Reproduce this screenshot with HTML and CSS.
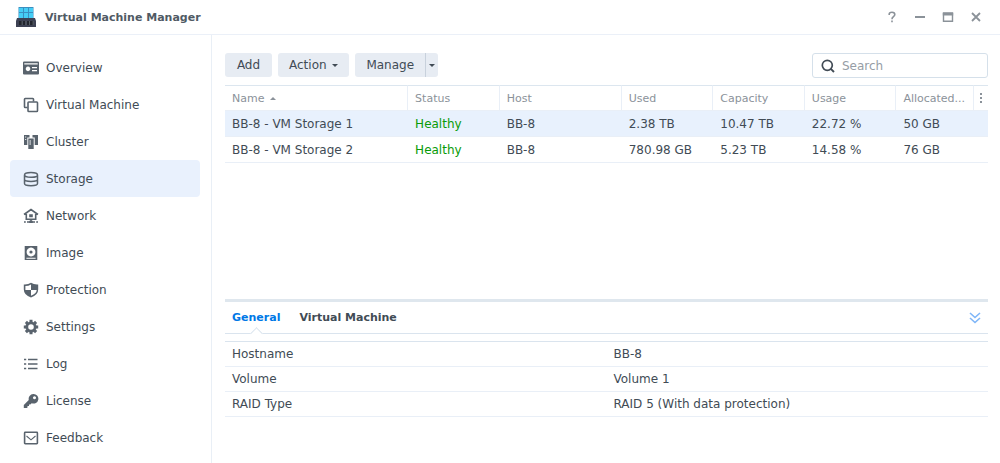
FILE: index.html
```html
<!DOCTYPE html>
<html lang="en">
<head>
  <meta charset="UTF-8">
  <meta name="viewport" content="width=device-width, initial-scale=1.0">
  <title>Virtual Machine Manager</title>
  <link rel="stylesheet" href="styles.css">
</head>
<body>
  <header class="titlebar">
    <svg class="app-icon" viewBox="0 0 20 20">
      <path d="M2.500 0h15v12h-15z" fill="#3a8fc0"/>
      <path d="M3 1h4v4h-4zM8 1h4v4h-4zM13 1h4v4h-4zM3 6h4v5h-4zM8 6h4v5h-4zM13 6h4v5h-4z" fill="#45cdf5"/>
      <path d="M1 11h18l1 3v6h-20v-6z" fill="#3d4153"/>
      <path d="M3 14h3v4h-3zM7 14h2v4h-2zM11 14h2v4h-2zM14 14h3v4h-3z" fill="#22252e"/>
      <path d="M6 14v4M10 14v4M13.500 14v4M17 14v4" stroke="#6b746f" stroke-width=".6"/>
    </svg>
    <h1>Virtual Machine Manager</h1>
    <div class="window-controls">
      <button type="button" aria-label="Help">
        <svg viewBox="0 0 12 12"><path d="M3.200 4V3.200Q3.200 1.300 6 1.300T8.800 3.600Q8.800 4.800 7.400 5.700Q6 6.500 6 8.200M6 9.500v1.800" fill="none" stroke="currentColor" stroke-width="1.600"/></svg>
      </button>
      <button type="button" aria-label="Minimize">
        <svg viewBox="0 0 12 12"><path d="M1 6h10" stroke="currentColor" stroke-width="2"/></svg>
      </button>
      <button type="button" aria-label="Maximize">
        <svg viewBox="0 0 12 12"><path d="M1.500 2v8.300h9V2M1 3h10" fill="none" stroke="currentColor" stroke-width="1.400"/><path d="M.8 1.200h10.400v3.300H.8z" fill="currentColor"/></svg>
      </button>
      <button type="button" aria-label="Close">
        <svg viewBox="0 0 12 12"><path d="M2 2l8 8M10 2l-8 8" stroke="currentColor" stroke-width="1.800"/></svg>
      </button>
    </div>
  </header>

  <div class="window-body">
    <nav class="sidebar">
      <a href="#overview">
        <svg viewBox="0 0 16 16"><path fill-rule="evenodd" d="M1 1.500h14q1 0 1 1v11q0 1-1 1H1q-1 0-1-1v-11q0-1 1-1zM1.300 3.200v1.300h13.400V3.200zM5 6.600a2.300 2.300 0 1 0 .01 0zM9 7v1.200h5V7zM9 10v1.200h5V10z" fill="currentColor"/></svg>
        Overview
      </a>
      <a href="#vm">
        <svg viewBox="0 0 16 16"><path d="M4.500 10.500H2.200q-.7 0-.7-.7V2.200q0-.7.700-.7h7.600q.7 0 .7.700v2.300" fill="none" stroke="currentColor" stroke-width="1.600"/><rect x="5" y="5" width="9.500" height="9.500" rx=".8" fill="none" stroke="currentColor" stroke-width="1.600"/></svg>
        Virtual Machine
      </a>
      <a href="#cluster">
        <svg viewBox="0 0 16 16"><path fill-rule="evenodd" d="M1 1h5.500v2.500H4.300V11H1zM2.200 2.500v1h1v-1zM2.200 5v1h1V5zM9.500 1H15v10h-3.300V3.500H9.500z" fill="currentColor"/><path fill-rule="evenodd" d="M5.300 4.500h5.400V15H5.300zM6.700 6v5h.8V6z" fill="currentColor"/></svg>
        Cluster
      </a>
      <a href="#storage" class="active">
        <svg viewBox="0 0 16 16"><path d="M1.500 4v8.500Q1.500 14.700 8 14.700t6.500-2.200V4M1.500 4Q1.500 1.500 8 1.500T14.500 4T8 6.300T1.500 4M1.500 8.200Q1.500 10.400 8 10.400t6.500-2.200" fill="none" stroke="currentColor" stroke-width="1.500"/></svg>
        Storage
      </a>
      <a href="#network">
        <svg viewBox="0 0 16 16"><path d="M1 6.500L8 1.500l7 5M3.300 6v5.200h9.400V6M8 11v2.500M4 14h8M1 14h1.800M13.200 14H15" fill="none" stroke="currentColor" stroke-width="1.600"/><path d="M6.200 6.300h3.600v3H6.200zM6.300 12.800h3.400V15H6.300z" fill="currentColor"/></svg>
        Network
      </a>
      <a href="#image">
        <svg viewBox="0 0 16 16"><path fill-rule="evenodd" d="M1.700 1h12.600v14H1.700zM8 2.600a4.400 4.400 0 1 0 .01 0zM3.400 12.800v1h9.200v-1z" fill="currentColor"/><circle cx="8" cy="7" r="1.600" fill="currentColor"/></svg>
        Image
      </a>
      <a href="#protection">
        <svg viewBox="0 0 16 16"><path fill-rule="evenodd" d="M8 .8q3 2 7.200 1.700v5q0 5.500-7.200 8Q.8 13 .8 7.500v-5Q5 2.800 8 .8zM8 2.500Q5.500 4 2.400 4v4H8zM8 8v5.700q5.500-2 5.700-5.700z" fill="currentColor"/></svg>
        Protection
      </a>
      <a href="#settings">
        <svg viewBox="0 0 16 16"><circle cx="8" cy="8" r="4.200" fill="none" stroke="currentColor" stroke-width="2.800"/><path d="M8 .8V3M8 13v2.200M.8 8H3M13 8h2.200M2.900 2.900l1.500 1.500M11.600 11.600l1.500 1.500M2.900 13.100l1.500-1.500M11.600 4.400l1.500-1.500" stroke="currentColor" stroke-width="3"/></svg>
        Settings
      </a>
      <a href="#log">
        <svg viewBox="0 0 16 16"><path d="M1 3.500h2.200M5 3.500h9.500M1 8h2.200M5 8h9.500M1 12.500h2.200M5 12.500h9.500" stroke="currentColor" stroke-width="1.700"/></svg>
        Log
      </a>
      <a href="#license">
        <svg viewBox="0 0 16 16"><path fill-rule="evenodd" d="M10.200 1a4.800 4.800 0 1 1-1.500 9.200L7.300 11.500H6v1.600H4.500v1.400L3.800 15H.8v-3L5.800 7A4.800 4.800 0 0 1 10.200 1zM11.500 3.200a1.500 1.500 0 1 0 .01 0z" fill="currentColor"/></svg>
        License
      </a>
      <a href="#feedback">
        <svg viewBox="0 0 16 16"><rect x="1.600" y="2.300" width="12.800" height="11.400" rx=".6" fill="none" stroke="currentColor" stroke-width="1.600"/><path d="M3.500 6L8 9.800 12.500 6" fill="none" stroke="currentColor" stroke-width="1.100"/></svg>
        Feedback
      </a>
    </nav>

    <main class="content">
      <div class="toolbar">
        <button type="button" class="btn">Add</button>
        <button type="button" class="btn">Action <span class="caret"></span></button>
        <div class="split-btn">
          <button type="button" class="btn">Manage</button>
          <button type="button" class="btn btn-arrow" aria-label="More manage options"><span class="caret"></span></button>
        </div>
        <label class="search">
          <svg viewBox="0 0 14 14"><circle cx="6.300" cy="6.300" r="5" fill="none" stroke="currentColor" stroke-width="1.700"/><path d="M9.800 9.800l3.200 3.200" stroke="currentColor" stroke-width="1.900"/></svg>
          <input type="text" placeholder="Search" aria-label="Search">
        </label>
      </div>

      <div class="grid-wrap">
        <table class="grid">
          <colgroup>
            <col class="col-name">
            <col class="col-status">
            <col class="col-host">
            <col class="col-status">
            <col class="col-status">
            <col class="col-status">
            <col class="col-allocated">
            <col class="col-menu">
          </colgroup>
          <thead>
            <tr>
              <th>Name <span class="caret caret-up"></span></th>
              <th>Status</th>
              <th>Host</th>
              <th>Used</th>
              <th>Capacity</th>
              <th>Usage</th>
              <th>Allocated...</th>
              <th class="menu-cell"><button type="button" class="dots" aria-label="Columns"><svg viewBox="0 0 4 12"><path d="M1 1h2v2H1zM1 5h2v2H1zM1 9h2v2H1z" fill="currentColor"/></svg></button></th>
            </tr>
          </thead>
          <tbody>
            <tr class="selected">
              <td>BB-8 - VM Storage 1</td>
              <td class="healthy">Healthy</td>
              <td>BB-8</td>
              <td>2.38 TB</td>
              <td>10.47 TB</td>
              <td>22.72 %</td>
              <td>50 GB</td>
              <td></td>
            </tr>
            <tr>
              <td>BB-8 - VM Storage 2</td>
              <td class="healthy">Healthy</td>
              <td>BB-8</td>
              <td>780.98 GB</td>
              <td>5.23 TB</td>
              <td>14.58 %</td>
              <td>76 GB</td>
              <td></td>
            </tr>
          </tbody>
        </table>
      </div>

      <section class="details">
        <div class="tabs">
          <button type="button" class="tab active">General</button>
          <button type="button" class="tab">Virtual Machine</button>
          <button type="button" class="collapse" aria-label="Collapse">
            <svg viewBox="0 0 12 12"><path d="M1 1l5 4.500L11 1M1 6l5 4.500L11 6" fill="none" stroke="currentColor" stroke-width="1.600"/></svg>
          </button>
        </div>
        <table class="info">
          <tr>
            <th>Hostname</th>
            <td>BB-8</td>
          </tr>
          <tr>
            <th>Volume</th>
            <td>Volume 1</td>
          </tr>
          <tr>
            <th>RAID Type</th>
            <td>RAID 5 (With data protection)</td>
          </tr>
        </table>
      </section>
    </main>
  </div>
</body>
</html>
```
FILE: styles.css
```css
* {
  margin: 0;
  padding: 0;
  box-sizing: border-box;
}

body {
  min-height: 100vh;
  display: flex;
  flex-direction: column;
  background-color: #fff;
  color: #414b55;
  font-family: Verdana, "DejaVu Sans", sans-serif;
  font-size: 12px;
}

button, input {
  font: inherit;
  color: inherit;
  border: none;
  background: none;
}

button {
  cursor: pointer;
}

svg {
  display: block;
}

/* Title bar */
.titlebar {
  display: flex;
  align-items: center;
  height: 35px;
  padding: 0 18px 0 16px;
  border-bottom: 1px solid #ebf0f8;
}

.app-icon {
  width: 20px;
  height: 20px;
  margin-right: 9px;
}

.titlebar h1 {
  font-size: 11px;
  color: #505a64;
}

.window-controls {
  display: flex;
  gap: 16px;
  margin-left: auto;
  color: #8b9299;
}

.window-controls svg {
  width: 12px;
  height: 12px;
}

.window-body {
  display: flex;
  flex: 1;
}

/* Sidebar */
.sidebar {
  width: 212px;
  flex: none;
  padding: 14px 11px 0 10px;
  border-right: 1px solid #e9eff6;
}

.sidebar a {
  display: flex;
  align-items: center;
  gap: 7px;
  height: 37px;
  padding-left: 13px;
  border-radius: 4px;
  color: #414b55;
  text-decoration: none;
}

.sidebar a.active {
  background-color: #e9f1fd;
}

.sidebar svg {
  width: 16px;
  height: 16px;
  color: #59636d;
}

/* Main area */
.content {
  display: flex;
  flex-direction: column;
  flex: 1;
  min-width: 0;
  padding: 18px 12px 0 13px;
}

.toolbar {
  display: flex;
  gap: 6px;
  margin-bottom: 7px;
}

.btn {
  min-width: 47px;
  height: 24px;
  padding: 0 11px;
  border-radius: 3px;
  background-color: #e7ecf3;
}

.split-btn {
  display: flex;
}

.split-btn .btn:first-child {
  border-radius: 3px 0 0 3px;
}

.split-btn .btn-arrow {
  min-width: 0;
  padding: 0 3px;
  border-left: 1px solid #c8d1dc;
  border-radius: 0 3px 3px 0;
}

.caret {
  display: inline-block;
  margin-left: 2px;
  border: 3px solid transparent;
  border-top-color: currentColor;
  border-bottom: none;
  vertical-align: middle;
}

.btn-arrow .caret {
  margin-left: 0;
}

.caret-up {
  border-top: none;
  border-bottom: 3px solid currentColor;
}

.search {
  display: flex;
  align-items: center;
  gap: 7px;
  width: 176px;
  height: 25px;
  margin-left: auto;
  padding: 0 8px;
  border: 1px solid #d5e0ea;
  border-radius: 3px;
}

.search svg {
  flex: none;
  width: 14px;
  height: 14px;
}

.search input {
  width: 100%;
  outline: none;
}

.search input::placeholder {
  color: #969da5;
}

/* Storage list */
.grid-wrap {
  flex: 1;
}

table {
  width: 100%;
  table-layout: fixed;
  border-spacing: 0;
}

th, td {
  padding: 0 7px;
  border-bottom: 1px solid #e9eff7;
  font-weight: normal;
  text-align: left;
  white-space: nowrap;
}

.grid th {
  height: 26px;
  border-top: 1px solid #dce6ef;
  border-right: 1px solid #e9eff7;
  color: #8b929a;
  font-size: 11px;
}

.grid th:last-child {
  border-right: none;
}

.grid td {
  height: 26px;
}

.col-name {
  width: 24%;
}

.col-status {
  width: 12%;
}

.col-host {
  width: 16%;
}

.col-menu {
  width: 14px;
}

.grid .menu-cell {
  padding: 0 5px;
}

.dots {
  display: block;
}

.dots svg {
  width: 4px;
  height: 12px;
}

.selected {
  background-color: #e8f1fd;
}

.grid .healthy {
  color: #089b08;
}

/* Details panel */
.details {
  flex: 0 0 164px;
  border-top: 3px solid #dfe7ee;
}

.tabs {
  display: flex;
  gap: 19px;
  height: 32px;
  margin-bottom: 7px;
  padding: 0 7px;
  border-bottom: 1px solid #dae4ee;
}

.tab {
  position: relative;
  font-size: 11px;
  font-weight: bold;
}

.tab.active {
  color: #0078e6;
}

/* little notch under the open tab */
.tab.active::after {
  content: "";
  position: absolute;
  left: 50%;
  bottom: -5px;
  width: 8px;
  height: 8px;
  margin-left: -4px;
  border: 1px solid #dae4ee;
  border-right: none;
  border-bottom: none;
  background-color: #fff;
  transform: rotate(45deg);
}

.collapse {
  margin-left: auto;
  color: #7fb6f8;
}

.collapse svg {
  width: 12px;
  height: 12px;
}

.info {
  border-top: 1px solid #dae4ee;
}

.info th {
  width: 50%;
}

.info th, .info td {
  height: 25px;
}
```
